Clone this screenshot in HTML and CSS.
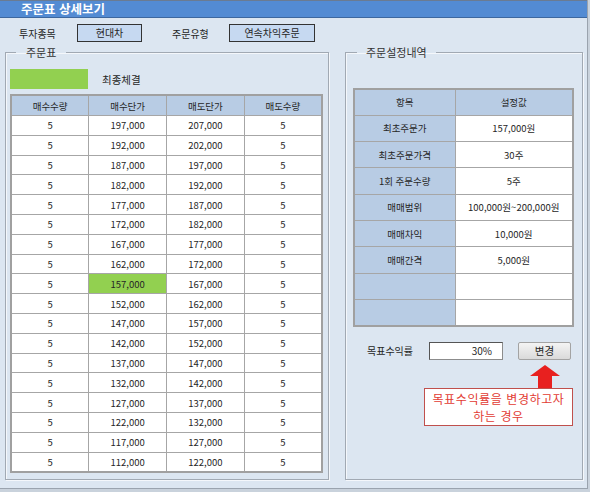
FILE: index.html
```html
<!DOCTYPE html>
<html lang="ko">
<head>
    <meta charset="UTF-8">
    <title>주문표 상세보기</title>
    <link rel="stylesheet" href="styles.css">
</head>
<body>
<div class="window">
    <div class="titlebar">주문표 상세보기</div>

    <div class="toolbar">
        <span class="label label-stock">투자종목</span>
        <span class="box box-stock">현대차</span>
        <span class="label label-type">주문유형</span>
        <span class="box box-type">연속차익주문</span>
    </div>

    <div class="panels">
        <fieldset class="group group-left">
            <legend>주문표</legend>
            <div class="legend-row">
                <span class="swatch"></span>
                <span class="swatch-text">최종체결</span>
            </div>
            <table class="order-table">
                <thead>
                    <tr><th>매수수량</th><th>매수단가</th><th>매도단가</th><th>매도수량</th></tr>
                </thead>
                <tbody>
                    <tr><td>5</td><td>197,000</td><td>207,000</td><td>5</td></tr>
                    <tr><td>5</td><td>192,000</td><td>202,000</td><td>5</td></tr>
                    <tr><td>5</td><td>187,000</td><td>197,000</td><td>5</td></tr>
                    <tr><td>5</td><td>182,000</td><td>192,000</td><td>5</td></tr>
                    <tr><td>5</td><td>177,000</td><td>187,000</td><td>5</td></tr>
                    <tr><td>5</td><td>172,000</td><td>182,000</td><td>5</td></tr>
                    <tr><td>5</td><td>167,000</td><td>177,000</td><td>5</td></tr>
                    <tr><td>5</td><td>162,000</td><td>172,000</td><td>5</td></tr>
                    <tr><td>5</td><td class="done">157,000</td><td>167,000</td><td>5</td></tr>
                    <tr><td>5</td><td>152,000</td><td>162,000</td><td>5</td></tr>
                    <tr><td>5</td><td>147,000</td><td>157,000</td><td>5</td></tr>
                    <tr><td>5</td><td>142,000</td><td>152,000</td><td>5</td></tr>
                    <tr><td>5</td><td>137,000</td><td>147,000</td><td>5</td></tr>
                    <tr><td>5</td><td>132,000</td><td>142,000</td><td>5</td></tr>
                    <tr><td>5</td><td>127,000</td><td>137,000</td><td>5</td></tr>
                    <tr><td>5</td><td>122,000</td><td>132,000</td><td>5</td></tr>
                    <tr><td>5</td><td>117,000</td><td>127,000</td><td>5</td></tr>
                    <tr><td>5</td><td>112,000</td><td>122,000</td><td>5</td></tr>
                </tbody>
            </table>
        </fieldset>

        <fieldset class="group group-right">
            <legend>주문설정내역</legend>
            <table class="setting-table">
                <colgroup>
                    <col class="col-item">
                    <col>
                </colgroup>
                <thead>
                    <tr><th>항목</th><th>설정값</th></tr>
                </thead>
                <tbody>
                    <tr><th>최초주문가</th><td>157,000원</td></tr>
                    <tr><th>최초주문가격</th><td>30주</td></tr>
                    <tr><th>1회 주문수량</th><td>5주</td></tr>
                    <tr><th>매매범위</th><td>100,000원~200,000원</td></tr>
                    <tr><th>매매차익</th><td>10,000원</td></tr>
                    <tr><th>매매간격</th><td>5,000원</td></tr>
                    <tr><th></th><td></td></tr>
                    <tr><th></th><td></td></tr>
                </tbody>
            </table>

            <div class="target-row">
                <span class="target-label">목표수익률</span>
                <span class="target-input">30%</span>
                <span class="btn">변경</span>
            </div>

            <svg class="arrow" width="32" height="23" viewBox="0 0 32 23">
                <polygon points="16,0 31,11 23,11 23,23 9,23 9,11 1,11" fill="#e8201f"/>
            </svg>
            <div class="note">목표수익률을 변경하고자<br>하는 경우</div>
        </fieldset>
    </div>
</div>
</body>
</html>
```

FILE: styles.css
```css
html, body {
    margin: 0;
    padding: 0;
}
body {
    font-family: "Noto Sans CJK KR", "Noto Sans", sans-serif;
    font-size: 10px;
    color: #262626;
    background-color: #c9d2dc;
    width: 590px;
    height: 492px;
    overflow: hidden;
}
.window {
    width: 588px;
    height: 489px;
    background-color: #dce6f1;
    border-right: 1px solid #9aa3ae;
    border-bottom: 1px solid #9aa3ae;
    box-sizing: border-box;
}
.titlebar {
    height: 18px;
    box-sizing: border-box;
    background-color: #538bd3;
    border-top: 1px solid #6a7b92;
    border-bottom: 1px solid #3d679e;
    color: #fff;
    font-weight: bold;
    font-size: 12.5px;
    line-height: 15px;
    padding-left: 21px;
}

/* 상단 종목 / 유형 */
.toolbar {
    display: flex;
    align-items: center;
    height: 18px;
    margin-top: 6px;
    padding-left: 19px;
}
.label {
    font-size: 10px;
}
.label-stock {
    width: 58px;
}
.label-type {
    width: 57px;
    margin-left: 30px;
}
.box {
    height: 18px;
    box-sizing: border-box;
    border: 1px solid #333;
    background-color: #c6d9f1;
    text-align: center;
    line-height: 15px;
    font-size: 10px;
}
.box-stock {
    width: 65px;
}
.box-type {
    width: 86px;
}

/* 그룹박스 */
.panels {
    display: flex;
    gap: 16px;
    padding-left: 5px;
    margin-top: 3px;
}
.group {
    margin: 0;
    min-width: 0;
    box-sizing: border-box;
    border: 1px solid #a1a9b3;
    box-shadow: inset 1px 1px 0 #f4f7fb, 1px 1px 0 #f4f7fb;
    height: 435px;
}
.group legend {
    font-size: 11px;
    line-height: 14px;
    color: #333;
}
.group-left {
    width: 324px;
    padding: 0 4px;
}
.group-left legend {
    margin-left: 6px;
    padding: 0 10px;
}
.group-right {
    width: 238px;
    padding: 0 7px;
}
.group-right legend {
    margin-left: 4px;
    padding: 0 9px;
}

.legend-row {
    display: flex;
    align-items: center;
    margin-top: 10px;
}
.swatch {
    width: 78px;
    height: 20px;
    background-color: #92d050;
}
.swatch-text {
    margin-left: 14px;
    font-size: 10.5px;
}

/* 표 */
table {
    border-collapse: collapse;
    table-layout: fixed;
    background-color: #fff;
}
th, td {
    border: 1px solid #a6a6a6;
    text-align: center;
    padding: 0;
    font-size: 9.5px;
    font-weight: normal;
}
.order-table {
    width: 313px;
    margin-top: 5px;
    border: 2px solid #a0a0a0;
}
.order-table th {
    background-color: #b8cce4;
    height: 19px;
}
.order-table td {
    height: 18.8px;
}
.order-table td.done {
    background-color: #92d050;
}

.setting-table {
    width: 221px;
    margin-top: 29px;
    border: 2px solid #a0a0a0;
}
.setting-table .col-item {
    width: 101px;
}
.setting-table th {
    background-color: #b8cce4;
}
.setting-table tr {
    height: 26.3px;
}

/* 목표수익률 */
.target-row {
    display: flex;
    align-items: center;
    margin-top: 15px;
    padding-left: 14px;
}
.target-label {
    width: 62px;
    font-size: 10px;
}
.target-input {
    width: 74px;
    height: 18px;
    box-sizing: border-box;
    background-color: #fff;
    border: 1px solid #8c8c8c;
    border-top-color: #555;
    border-left-color: #555;
    text-align: right;
    padding-right: 10px;
    line-height: 15px;
    font-size: 10px;
}
.btn {
    width: 53px;
    height: 18px;
    box-sizing: border-box;
    margin-left: 15px;
    border: 1px solid #a3a3a3;
    border-radius: 2px;
    background: linear-gradient(#f4f4f4, #dadada);
    text-align: center;
    line-height: 15px;
    font-size: 10.5px;
}

.arrow {
    display: block;
    margin: 5px 0 0 176px;
}
.note {
    width: 149px;
    box-sizing: border-box;
    margin-left: 71px;
    border: 1px solid #c0504d;
    background-color: #fff;
    color: #e23b33;
    font-size: 12px;
    letter-spacing: 0.6px;
    line-height: 17px;
    text-align: center;
    padding: 1px 0 1px;
}
```
